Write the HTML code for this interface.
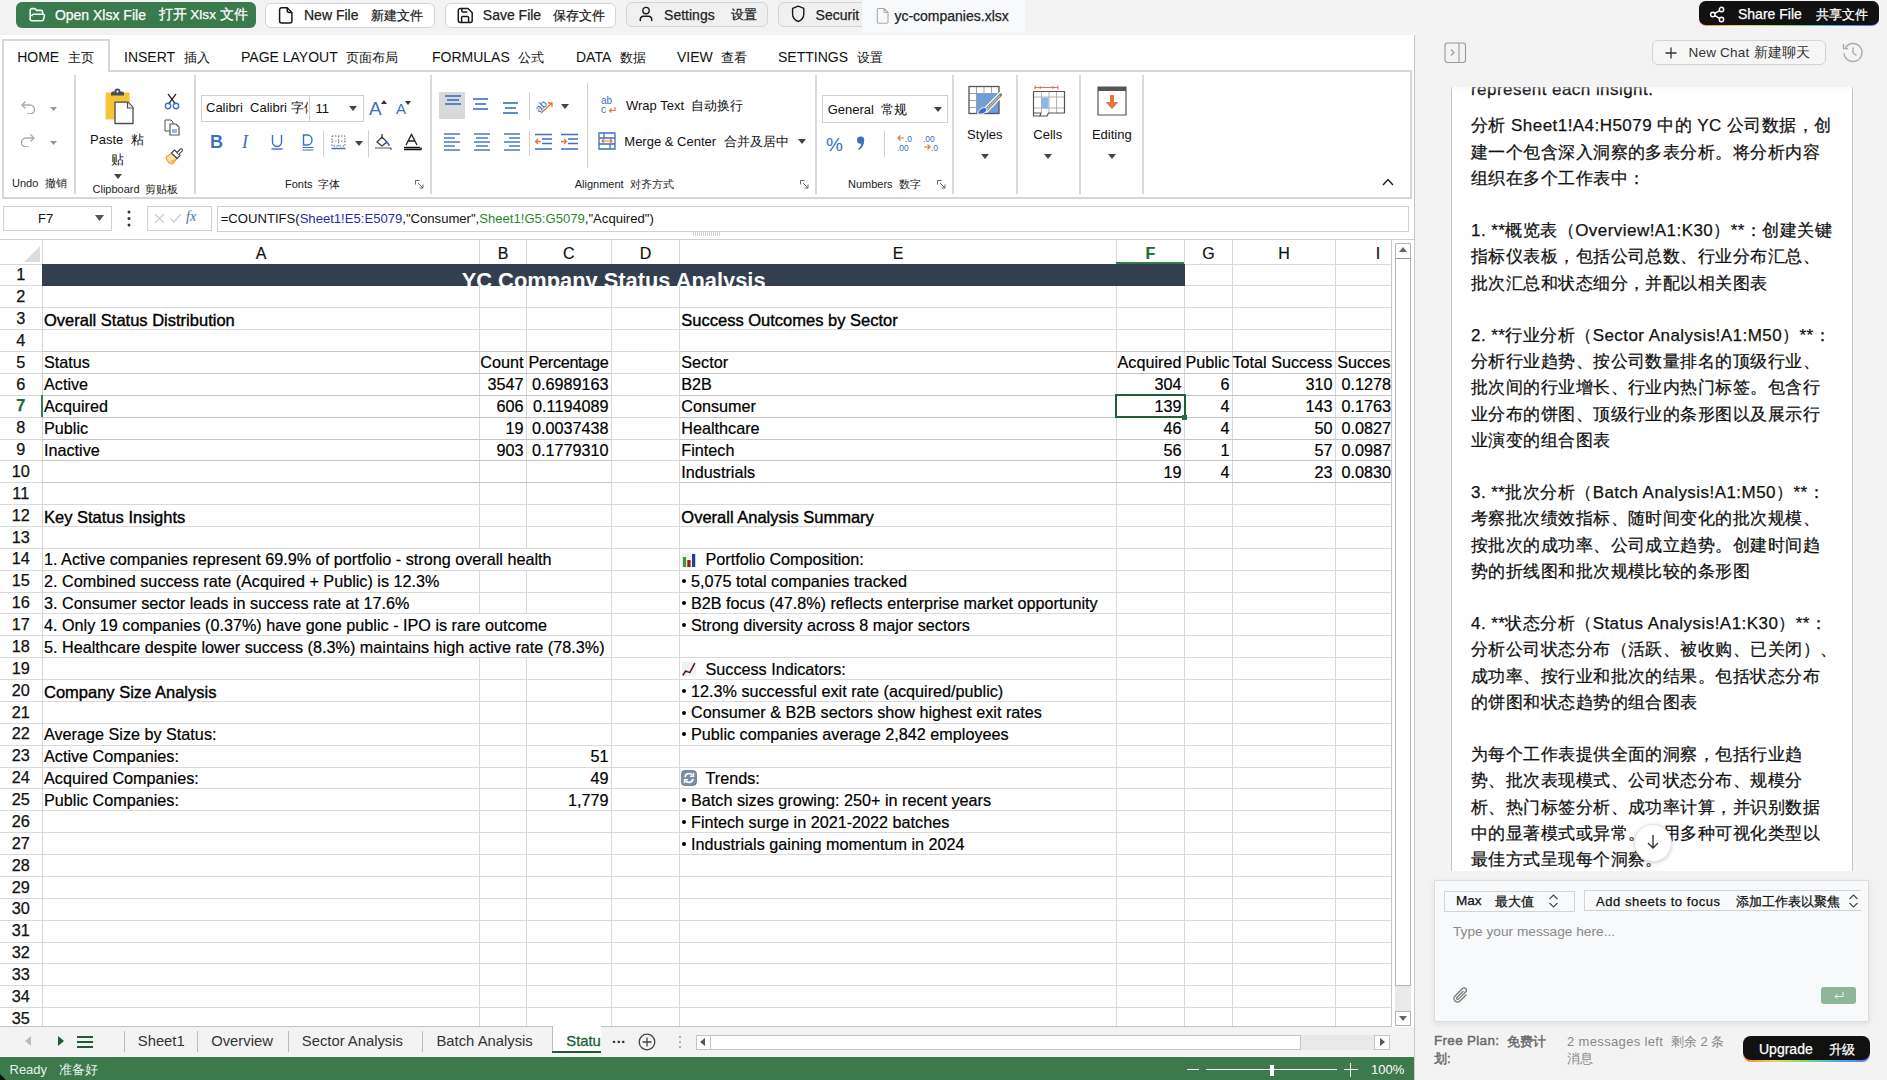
<!DOCTYPE html><html><head><meta charset="utf-8"><style>
*{margin:0;padding:0;box-sizing:border-box}
html,body{width:1887px;height:1080px;overflow:hidden;background:#f3f3f3;font-family:"Liberation Sans", sans-serif}
.t{position:absolute;white-space:pre}
.r{position:absolute}
</style></head><body>
<div class="r" style="left:0.0px;top:0.0px;width:1887.0px;height:35.0px;background:#f3f3f3"></div>
<div class="r" style="left:16.3px;top:2.2px;width:240.1px;height:26.0px;background:#3b7a4c;border-radius:6px"></div>
<svg class="r" style="left:28px;top:7px;" width="18" height="16" viewBox="0 0 18 16"><path d="M2.2 13V3.2a1.6 1.6 0 0 1 1.6-1.6h3.1l1.8 1.8h4.3a1.6 1.6 0 0 1 1.6 1.6v2.2" fill="none" stroke="#f2fbf4" stroke-width="1.6" stroke-linejoin="round"/><path d="M3.6 9.2c0.4-1.3 1-1.9 2.1-1.9h9.6a1.1 1.1 0 0 1 1.1 1.3l-0.8 3.8a1.6 1.6 0 0 1-1.6 1.3H3.8a1.6 1.6 0 0 1-1.6-1.6" fill="none" stroke="#f2fbf4" stroke-width="1.6" stroke-linejoin="round"/></svg>
<div class="t" style="left:54.9px;top:6.2px;font-size:14px;line-height:18px;color:#fff;font-weight:normal;-webkit-text-stroke:0.25px currentColor">Open Xlsx File</div>
<div class="t" style="left:158.5px;top:6.2px;font-size:13.6px;line-height:18px;color:#fff;font-weight:normal;-webkit-text-stroke:0.25px currentColor">打开 Xlsx 文件</div>
<div class="r" style="left:265.3px;top:2.5px;width:170.2px;height:25.5px;background:#fff;border:1px solid #d5d5d5;border-radius:6px"></div>
<svg class="r" style="left:278px;top:6px;" width="16" height="18" viewBox="0 0 16 18"><path d="M3.6 1.8h5.6l4.7 4.7v8.5a2 2 0 0 1-2 2H3.6a2 2 0 0 1-2-2V3.8a2 2 0 0 1 2-2z" fill="none" stroke="#1a1a1a" stroke-width="1.5" stroke-linejoin="round"/><path d="M9.2 1.8v2.7a2 2 0 0 0 2 2h2.7" fill="none" stroke="#1a1a1a" stroke-width="1.5"/></svg>
<div class="t" style="left:304.0px;top:6.2px;font-size:14px;line-height:18px;color:#222;font-weight:normal;-webkit-text-stroke:0.25px currentColor">New File</div>
<div class="t" style="left:370.8px;top:6.7px;font-size:13px;line-height:17px;color:#222;font-weight:normal;-webkit-text-stroke:0.25px currentColor">新建文件</div>
<div class="r" style="left:445.0px;top:2.5px;width:171.0px;height:25.5px;background:#fff;border:1px solid #d5d5d5;border-radius:6px"></div>
<svg class="r" style="left:457px;top:7px;" width="17" height="17" viewBox="0 0 17 17"><path d="M3.3 1.5h7.7l4.2 4.2v7.8a2 2 0 0 1-2 2H3.3a2 2 0 0 1-2-2V3.5a2 2 0 0 1 2-2z" fill="none" stroke="#1a1a1a" stroke-width="1.5" stroke-linejoin="round"/><path d="M4.8 1.5v2.5a1 1 0 0 0 1 1h4.5" fill="none" stroke="#1a1a1a" stroke-width="1.5"/><path d="M4.6 15.5v-5a1 1 0 0 1 1-1h5a1 1 0 0 1 1 1v5" fill="none" stroke="#1a1a1a" stroke-width="1.5"/></svg>
<div class="t" style="left:482.8px;top:6.2px;font-size:14px;line-height:18px;color:#222;font-weight:normal;-webkit-text-stroke:0.25px currentColor">Save File</div>
<div class="t" style="left:552.7px;top:6.7px;font-size:13px;line-height:17px;color:#222;font-weight:normal;-webkit-text-stroke:0.25px currentColor">保存文件</div>
<div class="r" style="left:626.0px;top:2.0px;width:142.0px;height:25.0px;background:#f0f0f0;border:1px solid #d5d5d5;border-radius:6px"></div>
<svg class="r" style="left:639px;top:6px;" width="14" height="16" viewBox="0 0 14 16"><circle cx="7" cy="4.6" r="3.2" fill="none" stroke="#1a1a1a" stroke-width="1.4"/><path d="M1.3 14.6v-1.2a3.2 3.2 0 0 1 3.2-3.2h5a3.2 3.2 0 0 1 3.2 3.2v1.2" fill="none" stroke="#1a1a1a" stroke-width="1.5" stroke-linecap="round"/></svg>
<div class="t" style="left:664.1px;top:5.7px;font-size:14px;line-height:18px;color:#222;font-weight:normal;-webkit-text-stroke:0.25px currentColor">Settings</div>
<div class="t" style="left:730.8px;top:6.2px;font-size:13px;line-height:17px;color:#222;font-weight:normal;-webkit-text-stroke:0.25px currentColor">设置</div>
<div class="r" style="left:778.0px;top:2.0px;width:102.0px;height:25.0px;background:#f0f0f0;border:1px solid #d5d5d5;border-radius:6px"></div>
<svg class="r" style="left:791px;top:5px;" width="15" height="18" viewBox="0 0 15 18"><path d="M7.2 1.2l5.6 2.2v5.5c0 3.6-2.4 6.2-5.6 7.6-3.2-1.4-5.6-4-5.6-7.6V3.4z" fill="none" stroke="#1a1a1a" stroke-width="1.4" stroke-linejoin="round"/></svg>
<div class="t" style="left:815.6px;top:5.7px;font-size:14px;line-height:18px;color:#222;font-weight:normal;-webkit-text-stroke:0.25px currentColor">Securit</div>
<div class="r" style="left:862.0px;top:0.0px;width:163.0px;height:33.0px;background:#f8f9fa"></div>
<svg class="r" style="left:876px;top:7px;" width="14" height="17" viewBox="0 0 14 17"><path d="M2.5 1.5h5.5l4 4v9.5a1.2 1.2 0 0 1-1.2 1.2H2.5a1.2 1.2 0 0 1-1.2-1.2V2.7a1.2 1.2 0 0 1 1.2-1.2z M8 1.5v3a1 1 0 0 0 1 1h3" fill="none" stroke="#aaa" stroke-width="1.1" stroke-linejoin="round"/></svg>
<div class="t" style="left:894.4px;top:7.0px;font-size:14px;line-height:18px;color:#222;font-weight:normal;-webkit-text-stroke:0.25px currentColor">yc-companies.xlsx</div>
<div class="r" style="left:1699.0px;top:1.3px;width:180.0px;height:25.2px;background:linear-gradient(90deg,#f08a3c,#e7d84a,#7bd67a,#4aa8e8,#6a6ef0);border-radius:7px"></div>
<div class="r" style="left:1699.0px;top:1.3px;width:180.0px;height:23.5px;background:#111;border-radius:7px"></div>
<svg class="r" style="left:1709px;top:6px;" width="17" height="17" viewBox="0 0 17 17"><circle cx="12.5" cy="3.5" r="2.2" fill="none" stroke="#fff" stroke-width="1.4"/><circle cx="3.8" cy="8.5" r="2.2" fill="none" stroke="#fff" stroke-width="1.4"/><circle cx="12.5" cy="13.5" r="2.2" fill="none" stroke="#fff" stroke-width="1.4"/><path d="M5.8 7.4l4.8-2.8M5.8 9.6l4.8 2.8" stroke="#fff" stroke-width="1.4"/></svg>
<div class="t" style="left:1738.0px;top:5.0px;font-size:14px;line-height:18px;color:#fff;font-weight:normal;-webkit-text-stroke:0.25px currentColor">Share File</div>
<div class="t" style="left:1816.0px;top:5.5px;font-size:13px;line-height:17px;color:#fff;font-weight:normal;-webkit-text-stroke:0.25px currentColor">共享文件</div>
<div class="r" style="left:0.0px;top:34.5px;width:1414.5px;height:1045.5px;background:#fff;border-right:1px solid #c8c8c8"></div>
<div class="r" style="left:2.0px;top:70.0px;width:1409.5px;height:129.0px;border:2px solid #d6d6d6;border-top:none;background:#fff"></div>
<div class="r" style="left:109.0px;top:69.5px;width:1302.5px;height:2.0px;background:#d6d6d6"></div>
<div class="r" style="left:2.0px;top:39.0px;width:108.0px;height:33.0px;background:#fff;border:2px solid #d6d6d6;border-bottom:none"></div>
<div class="t" style="left:17.2px;top:48.0px;font-size:14px;line-height:18px;color:#111;font-weight:normal;">HOME</div>
<div class="t" style="left:67.7px;top:48.5px;font-size:13px;line-height:17px;color:#111;font-weight:normal;">主页</div>
<div class="t" style="left:124.0px;top:48.0px;font-size:14px;line-height:18px;color:#111;font-weight:normal;">INSERT</div>
<div class="t" style="left:183.6px;top:48.5px;font-size:13px;line-height:17px;color:#111;font-weight:normal;">插入</div>
<div class="t" style="left:241.0px;top:48.0px;font-size:14px;line-height:18px;color:#111;font-weight:normal;">PAGE LAYOUT</div>
<div class="t" style="left:346.3px;top:48.5px;font-size:13px;line-height:17px;color:#111;font-weight:normal;">页面布局</div>
<div class="t" style="left:432.0px;top:48.0px;font-size:14px;line-height:18px;color:#111;font-weight:normal;">FORMULAS</div>
<div class="t" style="left:518.3px;top:48.5px;font-size:13px;line-height:17px;color:#111;font-weight:normal;">公式</div>
<div class="t" style="left:576.0px;top:48.0px;font-size:14px;line-height:18px;color:#111;font-weight:normal;">DATA</div>
<div class="t" style="left:619.8px;top:48.5px;font-size:13px;line-height:17px;color:#111;font-weight:normal;">数据</div>
<div class="t" style="left:677.0px;top:48.0px;font-size:14px;line-height:18px;color:#111;font-weight:normal;">VIEW</div>
<div class="t" style="left:721.3px;top:48.5px;font-size:13px;line-height:17px;color:#111;font-weight:normal;">查看</div>
<div class="t" style="left:778.0px;top:48.0px;font-size:14px;line-height:18px;color:#111;font-weight:normal;">SETTINGS</div>
<div class="t" style="left:856.5px;top:48.5px;font-size:13px;line-height:17px;color:#111;font-weight:normal;">设置</div>
<div class="r" style="left:73.6px;top:74.6px;width:2.0px;height:119.9px;background:#dadada"></div>
<div class="r" style="left:193.6px;top:74.6px;width:2.0px;height:119.9px;background:#dadada"></div>
<div class="r" style="left:429.9px;top:74.6px;width:2.0px;height:119.9px;background:#dadada"></div>
<div class="r" style="left:815.3px;top:74.6px;width:2.0px;height:119.9px;background:#dadada"></div>
<div class="r" style="left:951.7px;top:74.6px;width:2.0px;height:119.9px;background:#dadada"></div>
<div class="r" style="left:1015.7px;top:74.6px;width:2.0px;height:119.9px;background:#dadada"></div>
<div class="r" style="left:1078.7px;top:74.6px;width:2.0px;height:119.9px;background:#dadada"></div>
<div class="r" style="left:1142.0px;top:74.6px;width:2.0px;height:119.9px;background:#dadada"></div>
<div class="t" style="left:12.0px;top:176.4px;font-size:11px;line-height:14px;color:#222;font-weight:normal;">Undo</div>
<div class="t" style="left:45.0px;top:176.4px;font-size:11px;line-height:14px;color:#222;font-weight:normal;">撤销</div>
<div class="t" style="left:92.5px;top:182.0px;font-size:11px;line-height:14px;color:#222;font-weight:normal;">Clipboard</div>
<div class="t" style="left:145.0px;top:182.0px;font-size:11px;line-height:14px;color:#222;font-weight:normal;">剪贴板</div>
<div class="t" style="left:285.0px;top:177.0px;font-size:11px;line-height:14px;color:#222;font-weight:normal;">Fonts</div>
<div class="t" style="left:318.0px;top:177.0px;font-size:11px;line-height:14px;color:#222;font-weight:normal;">字体</div>
<div class="t" style="left:574.7px;top:176.7px;font-size:11px;line-height:14px;color:#222;font-weight:normal;">Alignment</div>
<div class="t" style="left:630.0px;top:176.7px;font-size:11px;line-height:14px;color:#222;font-weight:normal;">对齐方式</div>
<div class="t" style="left:848.0px;top:176.9px;font-size:11px;line-height:14px;color:#222;font-weight:normal;">Numbers</div>
<div class="t" style="left:899.0px;top:176.9px;font-size:11px;line-height:14px;color:#222;font-weight:normal;">数字</div>
<svg class="r" style="left:415px;top:180px;" width="9" height="9" viewBox="0 0 9 9"><path d="M0.5 0.5h4M0.5 0.5v4" stroke="#666" stroke-width="1" fill="none"/><path d="M3 3l5 5M8 4.5v3.5h-3.5" stroke="#666" stroke-width="1" fill="none"/></svg>
<svg class="r" style="left:800px;top:179.5px;" width="9" height="9" viewBox="0 0 9 9"><path d="M0.5 0.5h4M0.5 0.5v4" stroke="#666" stroke-width="1" fill="none"/><path d="M3 3l5 5M8 4.5v3.5h-3.5" stroke="#666" stroke-width="1" fill="none"/></svg>
<svg class="r" style="left:937px;top:179.5px;" width="9" height="9" viewBox="0 0 9 9"><path d="M0.5 0.5h4M0.5 0.5v4" stroke="#666" stroke-width="1" fill="none"/><path d="M3 3l5 5M8 4.5v3.5h-3.5" stroke="#666" stroke-width="1" fill="none"/></svg>
<svg class="r" style="left:1382px;top:178px;" width="12" height="8" viewBox="0 0 12 8"><path d="M1 7l5-5.5 5 5.5" fill="none" stroke="#222" stroke-width="1.4"/></svg>
<svg class="r" style="left:19px;top:100px;" width="18" height="14" viewBox="0 0 18 14"><path d="M3 5h8a4.5 4.5 0 0 1 0 9h-3" fill="none" stroke="#aaa" stroke-width="1.4"/><path d="M6.5 1.5L3 5l3.5 3.5" fill="none" stroke="#aaa" stroke-width="1.4"/></svg>
<svg class="r" style="left:50px;top:107px;" width="7" height="4" viewBox="0 0 7 4"><path d="M0 0h7L3.5 4z" fill="#999"/></svg>
<svg class="r" style="left:19px;top:133px;" width="18" height="14" viewBox="0 0 18 14"><path d="M15 5H7a4.5 4.5 0 0 0 0 9h3" fill="none" stroke="#aaa" stroke-width="1.4"/><path d="M11.5 1.5L15 5l-3.5 3.5" fill="none" stroke="#aaa" stroke-width="1.4"/></svg>
<svg class="r" style="left:50px;top:141px;" width="7" height="4" viewBox="0 0 7 4"><path d="M0 0h7L3.5 4z" fill="#999"/></svg>
<svg class="r" style="left:104px;top:88px;" width="31" height="37" viewBox="0 0 31 37"><rect x="1.6" y="4.5" width="24" height="27" rx="1" fill="#f4c537"/><path d="M7 7.5v-2a2 2 0 0 1 2-2h1.5a3 3 0 0 1 6 0H18a2 2 0 0 1 2 2v2z" fill="#4a4f55"/><circle cx="13.5" cy="3.6" r="1.1" fill="#fff"/><path d="M11 14.2h13l5 5.3v16H11z" fill="#fff" stroke="#4a4a4a" stroke-width="1.3" stroke-linejoin="round"/><path d="M23.5 14.2v5.8H29" fill="#f2f2f2" stroke="#4a4a4a" stroke-width="1.2"/></svg>
<div class="t" style="left:90.0px;top:130.9px;font-size:13px;line-height:17px;color:#111;font-weight:normal;">Paste</div>
<div class="t" style="left:131.0px;top:130.9px;font-size:13px;line-height:17px;color:#111;font-weight:normal;">粘</div>
<div class="t" style="left:111.0px;top:150.5px;font-size:13px;line-height:17px;color:#111;font-weight:normal;">贴</div>
<svg class="r" style="left:114px;top:174px;" width="8" height="5" viewBox="0 0 8 5"><path d="M0 0h8L4 5z" fill="#444"/></svg>
<svg class="r" style="left:164px;top:93px;" width="16" height="17" viewBox="0 0 16 17"><path d="M4 1l7.5 10M12 1L4.5 11" stroke="#333" stroke-width="1.3"/><circle cx="4" cy="13" r="2.7" fill="none" stroke="#3b6fc0" stroke-width="1.4"/><circle cx="12" cy="13" r="2.7" fill="none" stroke="#3b6fc0" stroke-width="1.4"/></svg>
<svg class="r" style="left:164px;top:119px;" width="17" height="17" viewBox="0 0 17 17"><path d="M1 1h6l2 2v9H1z" fill="#fff" stroke="#555" stroke-width="1"/><path d="M6 5h6l3 3v8H6z" fill="#fff" stroke="#555" stroke-width="1.2"/><path d="M8 11h5M8 13h5" stroke="#3b6fc0" stroke-width="1.1"/></svg>
<svg class="r" style="left:165px;top:147px;" width="19" height="18" viewBox="0 0 19 18"><path d="M1 10.5L6.5 6l5.5 5.5-4.5 5.5c-3-0.5-5.5-3-6.5-6.5z" fill="#fbe3b5" stroke="#eda23a" stroke-width="1.2" stroke-linejoin="round"/><path d="M5 14l3.5 3 3.5-5.5z" fill="#f2b54a"/><path d="M6.5 6l3-3 5.5 5.5-3 3z" fill="#fff" stroke="#444" stroke-width="1.1" stroke-linejoin="round"/><path d="M12 5.5l3.5-3.5a1.3 1.3 0 0 1 1.8 1.8L13.8 7.3" fill="#fff" stroke="#444" stroke-width="1.1"/></svg>
<div class="r" style="left:201.3px;top:94.9px;width:108.7px;height:27.4px;border:1px solid #d0d0d0;background:#fff"></div>
<div class="r" style="left:309.0px;top:94.9px;width:55.2px;height:27.4px;border:1px solid #d0d0d0;background:#fff"></div>
<div class="t" style="left:206px;top:99px;width:102px;overflow:hidden;font-size:13px;line-height:18px;color:#111">Calibri  Calibri 字体</div>
<div class="t" style="left:315.5px;top:100.1px;font-size:13px;line-height:17px;color:#111;font-weight:normal;">11</div>
<svg class="r" style="left:349px;top:106px;" width="8" height="5" viewBox="0 0 8 5"><path d="M0 0h8L4 5z" fill="#444"/></svg>
<div class="t" style="left:369.0px;top:96.0px;font-size:19px;line-height:25px;color:#3b6fc0;font-weight:normal;">A</div>
<svg class="r" style="left:381px;top:100px;" width="6" height="4" viewBox="0 0 6 4"><path d="M0 4L3 0l3 4z" fill="#333"/></svg>
<div class="t" style="left:396.0px;top:99.0px;font-size:15px;line-height:20px;color:#3b6fc0;font-weight:normal;">A</div>
<svg class="r" style="left:405px;top:101px;" width="6" height="4" viewBox="0 0 6 4"><path d="M0 0h6L3 4z" fill="#333"/></svg>
<div class="t" style="left:210.0px;top:130.5px;font-size:18px;line-height:23px;color:#3b6fc0;font-weight:bold;">B</div>
<div class="t" style="left:242px;top:130px;font-size:18px;line-height:24px;color:#3b6fc0;font-family:'Liberation Serif',serif;font-style:italic">I</div>
<svg class="r" style="left:271px;top:134px;" width="12" height="16" viewBox="0 0 12 16"><path d="M1.5 1v7a4.5 4.5 0 0 0 9 0V1" fill="none" stroke="#3b6fc0" stroke-width="1.4"/><path d="M0.5 15h11" stroke="#3b6fc0" stroke-width="1.4"/></svg>
<svg class="r" style="left:302px;top:134px;" width="12" height="17" viewBox="0 0 12 17"><path d="M1.5 1h4a4.5 5 0 0 1 0 10h-4z" fill="none" stroke="#3b6fc0" stroke-width="1.4"/><path d="M0.5 13.5h11M0.5 16h11" stroke="#3b6fc0" stroke-width="1.2"/></svg>
<div class="r" style="left:323.0px;top:129.6px;width:1.0px;height:27.8px;background:#d0d0d0"></div>
<svg class="r" style="left:331px;top:135px;" width="16" height="15" viewBox="0 0 16 15"><path d="M1 1h13v10H1z" fill="none" stroke="#666" stroke-width="1" stroke-dasharray="1.5 1.5"/><path d="M7.5 1v10M1 6h13" stroke="#888" stroke-width="1" stroke-dasharray="1.5 1.5"/><path d="M0.5 13.5h14" stroke="#3b6fc0" stroke-width="1.5"/></svg>
<svg class="r" style="left:355px;top:141px;" width="8" height="5" viewBox="0 0 8 5"><path d="M0 0h8L4 5z" fill="#444"/></svg>
<div class="r" style="left:368.0px;top:129.6px;width:1.0px;height:27.8px;background:#d0d0d0"></div>
<svg class="r" style="left:374px;top:133px;" width="19" height="18" viewBox="0 0 19 18"><path d="M3 9l5-5 5 5-5 4z" fill="none" stroke="#333" stroke-width="1.2"/><path d="M8 1v5" stroke="#333" stroke-width="1.2"/><path d="M12 9c2 1 3 3 3 4" stroke="#3b6fc0" stroke-width="1.6" fill="none"/><path d="M1 15h16v2" fill="none" stroke="#555" stroke-width="1.2"/></svg>
<svg class="r" style="left:403px;top:133px;" width="19" height="18" viewBox="0 0 19 18"><path d="M3 12L8.5 1.5 14 12M5 8h7" fill="none" stroke="#222" stroke-width="1.4"/><path d="M1 14.5h16M1 16.5h17v-2" fill="none" stroke="#111" stroke-width="1.4"/></svg>
<div class="r" style="left:438.9px;top:92.3px;width:26.2px;height:26.3px;background:#d9d9d9"></div>
<svg class="r" style="left:440px;top:93px;" width="24" height="24" viewBox="0 0 24 24"><path d="M5 3H21" stroke="#3b6fc0" stroke-width="1.6"/><path d="M7 7H19" stroke="#3b6fc0" stroke-width="1.6"/><path d="M5 11H21" stroke="#3b6fc0" stroke-width="1.6"/></svg>
<svg class="r" style="left:471px;top:96px;" width="24" height="24" viewBox="0 0 24 24"><path d="M2 3H17" stroke="#3b6fc0" stroke-width="1.6"/><path d="M4 8H15" stroke="#3b6fc0" stroke-width="1.6"/><path d="M2 13H17" stroke="#3b6fc0" stroke-width="1.6"/></svg>
<svg class="r" style="left:501px;top:100px;" width="24" height="24" viewBox="0 0 24 24"><path d="M2 3H17" stroke="#3b6fc0" stroke-width="1.6"/><path d="M4 8H15" stroke="#3b6fc0" stroke-width="1.6"/><path d="M2 13H17" stroke="#3b6fc0" stroke-width="1.6"/></svg>
<div class="r" style="left:529.0px;top:92.0px;width:1.0px;height:28.0px;background:#d0d0d0"></div>
<svg class="r" style="left:534px;top:96px;" width="22" height="20" viewBox="0 0 22 20"><text x="1" y="13" font-size="11" fill="#3b6fc0" transform="rotate(-45 8 10)" font-family="Liberation Sans">ab</text><path d="M7 17l11-10M14 7h4v4" fill="none" stroke="#e8743b" stroke-width="1.3"/></svg>
<svg class="r" style="left:561px;top:104px;" width="8" height="5" viewBox="0 0 8 5"><path d="M0 0h8L4 5z" fill="#444"/></svg>
<svg class="r" style="left:443px;top:133px;" width="24" height="24" viewBox="0 0 24 24"><path d="M1 1H17" stroke="#3b6fc0" stroke-width="1.4"/><path d="M1 5H12" stroke="#3b6fc0" stroke-width="1.4"/><path d="M1 9H17" stroke="#3b6fc0" stroke-width="1.4"/><path d="M1 13H12" stroke="#3b6fc0" stroke-width="1.4"/><path d="M1 17H17" stroke="#3b6fc0" stroke-width="1.4"/></svg>
<svg class="r" style="left:473px;top:133px;" width="24" height="24" viewBox="0 0 24 24"><path d="M1 1H17" stroke="#3b6fc0" stroke-width="1.4"/><path d="M3 5H15" stroke="#3b6fc0" stroke-width="1.4"/><path d="M1 9H17" stroke="#3b6fc0" stroke-width="1.4"/><path d="M3 13H15" stroke="#3b6fc0" stroke-width="1.4"/><path d="M1 17H17" stroke="#3b6fc0" stroke-width="1.4"/></svg>
<svg class="r" style="left:503px;top:133px;" width="24" height="24" viewBox="0 0 24 24"><path d="M1 1H17" stroke="#3b6fc0" stroke-width="1.4"/><path d="M6 5H17" stroke="#3b6fc0" stroke-width="1.4"/><path d="M1 9H17" stroke="#3b6fc0" stroke-width="1.4"/><path d="M6 13H17" stroke="#3b6fc0" stroke-width="1.4"/><path d="M1 17H17" stroke="#3b6fc0" stroke-width="1.4"/></svg>
<div class="r" style="left:529.0px;top:131.0px;width:1.0px;height:25.0px;background:#d0d0d0"></div>
<svg class="r" style="left:534px;top:133px;" width="20" height="20" viewBox="0 0 20 20"><path d="M1 1.5h17M8 6h10M8 10.5h10M1 16h17" stroke="#3b6fc0" stroke-width="1.4"/><path d="M7 8.5H1.5M4 6l-2.5 2.5L4 11" fill="none" stroke="#e8743b" stroke-width="1.3"/></svg>
<svg class="r" style="left:560px;top:133px;" width="20" height="20" viewBox="0 0 20 20"><path d="M1 1.5h17M8 6h10M8 10.5h10M1 16h17" stroke="#3b6fc0" stroke-width="1.4"/><path d="M1 8.5h5.5M4 6l2.5 2.5L4 11" fill="none" stroke="#e8743b" stroke-width="1.3"/></svg>
<div class="r" style="left:587.0px;top:83.4px;width:1.0px;height:84.8px;background:#d0d0d0"></div>
<svg class="r" style="left:600px;top:96px;" width="18" height="19" viewBox="0 0 18 19"><text x="1" y="8" font-size="10" fill="#3b6fc0" font-family="Liberation Sans">ab</text><text x="1" y="17" font-size="10" fill="#3b6fc0" font-family="Liberation Sans">c</text><path d="M15 11v3.5H9.5M11.5 12.5l-2 2 2 2" fill="none" stroke="#e8743b" stroke-width="1.2"/></svg>
<div class="t" style="left:626.0px;top:97.0px;font-size:13px;line-height:17px;color:#111;font-weight:normal;">Wrap Text</div>
<div class="t" style="left:691.0px;top:97.0px;font-size:13px;line-height:17px;color:#111;font-weight:normal;">自动换行</div>
<svg class="r" style="left:598px;top:132px;" width="18" height="18" viewBox="0 0 18 18"><path d="M1 1h16v16H1z M1 6h16M1 12h16M6 1v5M12 12v5" fill="none" stroke="#3b6fc0" stroke-width="1.3"/><path d="M4 9h10M6 7l-2 2 2 2M12 7l2 2-2 2" fill="none" stroke="#e8743b" stroke-width="1.2"/></svg>
<div class="t" style="left:624.3px;top:132.8px;font-size:13px;line-height:17px;color:#111;font-weight:normal;">Merge & Center</div>
<div class="t" style="left:724.0px;top:132.8px;font-size:13px;line-height:17px;color:#111;font-weight:normal;">合并及居中</div>
<svg class="r" style="left:798px;top:139px;" width="8" height="5" viewBox="0 0 8 5"><path d="M0 0h8L4 5z" fill="#444"/></svg>
<div class="r" style="left:822.3px;top:95.2px;width:125.5px;height:28.0px;border:1px solid #d0d0d0;background:#fff"></div>
<div class="t" style="left:827.7px;top:100.7px;font-size:13px;line-height:17px;color:#111;font-weight:normal;">General</div>
<div class="t" style="left:881.0px;top:100.7px;font-size:13px;line-height:17px;color:#111;font-weight:normal;">常规</div>
<svg class="r" style="left:934px;top:107px;" width="8" height="5" viewBox="0 0 8 5"><path d="M0 0h8L4 5z" fill="#444"/></svg>
<div class="t" style="left:826.0px;top:131.5px;font-size:19px;line-height:25px;color:#3b6fc0;font-weight:normal;">%</div>
<svg class="r" style="left:856px;top:136px;" width="9" height="15" viewBox="0 0 9 15"><circle cx="4.6" cy="4.2" r="3.6" fill="#3b6fc0"/><path d="M7.8 4.5c0.5 4-1.5 7.5-5 9.5l-0.8-1c2.5-2 3.5-4 3.2-6.5z" fill="#3b6fc0"/></svg>
<div class="r" style="left:883.5px;top:131.0px;width:1.0px;height:26.0px;background:#d0d0d0"></div>
<svg class="r" style="left:897px;top:134px;" width="18" height="19" viewBox="0 0 18 19"><path d="M1 4h6M3.5 1.5L1 4l2.5 2.5" fill="none" stroke="#e8743b" stroke-width="1.2"/><text x="8" y="8" font-size="8.5" fill="#3b6fc0" font-family="Liberation Sans">.0</text><text x="0" y="17" font-size="8.5" fill="#3b6fc0" font-family="Liberation Sans">.00</text></svg>
<svg class="r" style="left:923px;top:134px;" width="18" height="19" viewBox="0 0 18 19"><text x="0" y="8" font-size="8.5" fill="#3b6fc0" font-family="Liberation Sans">.00</text><path d="M1 13h6M4.5 10.5L7 13l-2.5 2.5" fill="none" stroke="#e8743b" stroke-width="1.2"/><text x="8" y="17" font-size="8.5" fill="#3b6fc0" font-family="Liberation Sans">.0</text></svg>
<svg class="r" style="left:968px;top:85px;" width="35" height="32" viewBox="0 0 35 32"><rect x="1" y="1.5" width="30" height="27" fill="#fff"/><rect x="8.5" y="8.5" width="22.5" height="20" fill="#6a9ee6"/><path d="M1 8.5h30M1 15.5h30M1 22.5h30M8.5 1.5v27M16 1.5v27M23.5 1.5v27" stroke="#999" stroke-width="0.9"/><rect x="1" y="1.5" width="30" height="27" fill="none" stroke="#555" stroke-width="1.3"/><path d="M32.5 10L18 25" stroke="#fff" stroke-width="5.5" stroke-linecap="round"/><path d="M32.5 10L18 25" stroke="#777" stroke-width="3.2" stroke-linecap="round"/><path d="M32 10.5L19 24" stroke="#bbb" stroke-width="1.4"/><path d="M9.5 29c1-4 4-6.5 7-6.5 2 0 3 2 2 3.5-2 3-5.5 3.5-9 3z" fill="#3a70c8" stroke="#fff" stroke-width="1"/></svg>
<div class="t" style="left:584.8px;width:800px;text-align:center;top:126.0px;font-size:13px;line-height:17px;color:#111;font-weight:normal;">Styles</div>
<svg class="r" style="left:981px;top:154px;" width="8" height="5" viewBox="0 0 8 5"><path d="M0 0h8L4 5z" fill="#444"/></svg>
<svg class="r" style="left:1032px;top:85px;" width="34" height="32" viewBox="0 0 34 32"><path d="M3 2.5h23M3 0.5v4M26 0.5v4" stroke="#e0705a" stroke-width="1.1"/><path d="M6 2.5l3-1.5v3zM23 2.5l-3-1.5v3z" fill="#e0705a"/><rect x="1.5" y="6.5" width="31" height="21.5" fill="#fff"/><path d="M1.5 12h31M1.5 23h31M9.5 6.5v21.5M17 6.5v21.5M24.5 6.5v21.5" stroke="#aaa" stroke-width="0.9"/><rect x="10" y="12.5" width="6.5" height="11" fill="#8ab6ee"/><path d="M1.5 6.5h31v21.5H16.5l-1.5 3h-7l1-3H1.5z" fill="none" stroke="#555" stroke-width="1.2" stroke-linejoin="round"/><path d="M1.5 28v3h6.5" fill="none" stroke="#555" stroke-width="1.2"/></svg>
<div class="t" style="left:647.8px;width:800px;text-align:center;top:126.0px;font-size:13px;line-height:17px;color:#111;font-weight:normal;">Cells</div>
<svg class="r" style="left:1044px;top:154px;" width="8" height="5" viewBox="0 0 8 5"><path d="M0 0h8L4 5z" fill="#444"/></svg>
<svg class="r" style="left:1097px;top:86px;" width="30" height="30" viewBox="0 0 30 30"><path d="M1 1h28v28H1z" fill="#fff" stroke="#555" stroke-width="1.2"/><path d="M1 1h28v4H1z" fill="#555"/><path d="M13 9h4v7h4.5L15 23l-6.5-7H13z" fill="#e8743b"/></svg>
<div class="t" style="left:711.8px;width:800px;text-align:center;top:126.0px;font-size:13px;line-height:17px;color:#111;font-weight:normal;">Editing</div>
<svg class="r" style="left:1108px;top:154px;" width="8" height="5" viewBox="0 0 8 5"><path d="M0 0h8L4 5z" fill="#444"/></svg>
<div class="r" style="left:2.5px;top:205.8px;width:109.0px;height:24.8px;border:1px solid #d0d0d0;background:#fff"></div>
<div class="t" style="left:38.0px;top:210.0px;font-size:13px;line-height:17px;color:#111;font-weight:normal;">F7</div>
<svg class="r" style="left:95px;top:215px;" width="9" height="6" viewBox="0 0 9 6"><path d="M0 0h9L4.5 6z" fill="#555"/></svg>
<svg class="r" style="left:127px;top:210px;" width="4" height="17" viewBox="0 0 4 17"><circle cx="2" cy="2" r="1.5" fill="#333"/><circle cx="2" cy="8.5" r="1.5" fill="#333"/><circle cx="2" cy="15" r="1.5" fill="#333"/></svg>
<div class="r" style="left:147.0px;top:205.8px;width:64.6px;height:25.0px;border:1px solid #d0d0d0;background:#fff"></div>
<svg class="r" style="left:153px;top:212px;" width="14" height="12" viewBox="0 0 14 12"><path d="M2 2l9 9M11 2l-9 9" stroke="#ccc" stroke-width="1.2"/></svg>
<svg class="r" style="left:169px;top:212px;" width="14" height="12" viewBox="0 0 14 12"><path d="M1.5 6.5l3.5 3.5 7-8" fill="none" stroke="#ccc" stroke-width="1.2"/></svg>
<div class="t" style="left:186px;top:209px;font-size:14px;line-height:16px;color:#3b6fc0;font-family:'Liberation Serif',serif;font-style:italic">fx</div>
<div class="r" style="left:217.0px;top:206.0px;width:1191.5px;height:25.6px;border:1px solid #d0d0d0;background:#fff"></div>
<div class="t" style="left:220.7px;top:210.3px;font-size:13.1px;line-height:17px;color:#111;font-weight:normal;">=COUNTIFS(<span style="color:#1f2bb0">Sheet1!E5:E5079</span>,"Consumer",<span style="color:#2a8a2a">Sheet1!G5:G5079</span>,"Acquired")</div>
<svg class="r" style="left:693px;top:232px;" width="27" height="5" viewBox="0 0 27 5"><path d="M0 1h27M0 3h27" stroke="#999" stroke-width="0.8" stroke-dasharray="1 1"/></svg>
<div class="r" style="left:0;top:239px;width:1391.5px;height:788px;overflow:hidden">
<div class="r" style="left:0;top:-239px;width:1887px;height:1080px">
<div class="r" style="left:0.0px;top:239.2px;width:1414.0px;height:1.2px;background:#cfcfcf"></div>
<div class="r" style="left:0.0px;top:263.5px;width:1391.3px;height:1.0px;background:#d9d9d9"></div>
<div class="r" style="left:0.0px;top:285.4px;width:1391.3px;height:1.0px;background:#d9d9d9"></div>
<div class="r" style="left:0.0px;top:307.2px;width:1391.3px;height:1.0px;background:#d9d9d9"></div>
<div class="r" style="left:0.0px;top:329.1px;width:1391.3px;height:1.0px;background:#d9d9d9"></div>
<div class="r" style="left:0.0px;top:351.0px;width:1391.3px;height:1.0px;background:#d9d9d9"></div>
<div class="r" style="left:0.0px;top:372.9px;width:1391.3px;height:1.0px;background:#d9d9d9"></div>
<div class="r" style="left:0.0px;top:394.7px;width:1391.3px;height:1.0px;background:#d9d9d9"></div>
<div class="r" style="left:0.0px;top:416.6px;width:1391.3px;height:1.0px;background:#d9d9d9"></div>
<div class="r" style="left:0.0px;top:438.5px;width:1391.3px;height:1.0px;background:#d9d9d9"></div>
<div class="r" style="left:0.0px;top:460.3px;width:1391.3px;height:1.0px;background:#d9d9d9"></div>
<div class="r" style="left:0.0px;top:482.2px;width:1391.3px;height:1.0px;background:#d9d9d9"></div>
<div class="r" style="left:0.0px;top:504.1px;width:1391.3px;height:1.0px;background:#d9d9d9"></div>
<div class="r" style="left:0.0px;top:525.9px;width:1391.3px;height:1.0px;background:#d9d9d9"></div>
<div class="r" style="left:0.0px;top:547.8px;width:1391.3px;height:1.0px;background:#d9d9d9"></div>
<div class="r" style="left:0.0px;top:569.7px;width:1391.3px;height:1.0px;background:#d9d9d9"></div>
<div class="r" style="left:0.0px;top:591.5px;width:1391.3px;height:1.0px;background:#d9d9d9"></div>
<div class="r" style="left:0.0px;top:613.4px;width:1391.3px;height:1.0px;background:#d9d9d9"></div>
<div class="r" style="left:0.0px;top:635.3px;width:1391.3px;height:1.0px;background:#d9d9d9"></div>
<div class="r" style="left:0.0px;top:657.2px;width:1391.3px;height:1.0px;background:#d9d9d9"></div>
<div class="r" style="left:0.0px;top:679.0px;width:1391.3px;height:1.0px;background:#d9d9d9"></div>
<div class="r" style="left:0.0px;top:700.9px;width:1391.3px;height:1.0px;background:#d9d9d9"></div>
<div class="r" style="left:0.0px;top:722.8px;width:1391.3px;height:1.0px;background:#d9d9d9"></div>
<div class="r" style="left:0.0px;top:744.6px;width:1391.3px;height:1.0px;background:#d9d9d9"></div>
<div class="r" style="left:0.0px;top:766.5px;width:1391.3px;height:1.0px;background:#d9d9d9"></div>
<div class="r" style="left:0.0px;top:788.4px;width:1391.3px;height:1.0px;background:#d9d9d9"></div>
<div class="r" style="left:0.0px;top:810.2px;width:1391.3px;height:1.0px;background:#d9d9d9"></div>
<div class="r" style="left:0.0px;top:832.1px;width:1391.3px;height:1.0px;background:#d9d9d9"></div>
<div class="r" style="left:0.0px;top:854.0px;width:1391.3px;height:1.0px;background:#d9d9d9"></div>
<div class="r" style="left:0.0px;top:875.9px;width:1391.3px;height:1.0px;background:#d9d9d9"></div>
<div class="r" style="left:0.0px;top:897.7px;width:1391.3px;height:1.0px;background:#d9d9d9"></div>
<div class="r" style="left:0.0px;top:919.6px;width:1391.3px;height:1.0px;background:#d9d9d9"></div>
<div class="r" style="left:0.0px;top:941.5px;width:1391.3px;height:1.0px;background:#d9d9d9"></div>
<div class="r" style="left:0.0px;top:963.3px;width:1391.3px;height:1.0px;background:#d9d9d9"></div>
<div class="r" style="left:0.0px;top:985.2px;width:1391.3px;height:1.0px;background:#d9d9d9"></div>
<div class="r" style="left:0.0px;top:1007.1px;width:1391.3px;height:1.0px;background:#d9d9d9"></div>
<div class="r" style="left:0.0px;top:1029.0px;width:1391.3px;height:1.0px;background:#d9d9d9"></div>
<div class="r" style="left:42.0px;top:240.0px;width:1.0px;height:786.5px;background:#d4d4d4"></div>
<div class="r" style="left:479.2px;top:240.0px;width:1.0px;height:786.5px;background:#d9d9d9"></div>
<div class="r" style="left:525.9px;top:240.0px;width:1.0px;height:786.5px;background:#d9d9d9"></div>
<div class="r" style="left:610.9px;top:240.0px;width:1.0px;height:786.5px;background:#d9d9d9"></div>
<div class="r" style="left:679.2px;top:240.0px;width:1.0px;height:786.5px;background:#d9d9d9"></div>
<div class="r" style="left:1115.9px;top:240.0px;width:1.0px;height:786.5px;background:#d9d9d9"></div>
<div class="r" style="left:1183.9px;top:240.0px;width:1.0px;height:786.5px;background:#d9d9d9"></div>
<div class="r" style="left:1232.1px;top:240.0px;width:1.0px;height:786.5px;background:#d9d9d9"></div>
<div class="r" style="left:1334.9px;top:240.0px;width:1.0px;height:786.5px;background:#d9d9d9"></div>
<div class="r" style="left:1390.8px;top:240.0px;width:1.0px;height:786.5px;background:#d9d9d9"></div>
<svg class="r" style="left:23px;top:246px;" width="18" height="16" viewBox="0 0 18 16"><path d="M17 0v16H1z" fill="#dcdcdc"/></svg>
<div class="r" style="left:479.2px;top:548.8px;width:47.8px;height:20.9px;background:#fff"></div>
<div class="r" style="left:479.2px;top:614.4px;width:47.8px;height:20.9px;background:#fff"></div>
<div class="r" style="left:479.2px;top:636.3px;width:47.8px;height:20.9px;background:#fff"></div>
<div class="r" style="left:42.4px;top:264.3px;width:1142.5px;height:21.5px;background:#333f4f;overflow:hidden"></div>
<div class="r" style="left:42.4px;top:264.3px;width:1142.5px;height:21.5px;overflow:hidden"><div class="t" style="left:0;width:1142.5px;text-align:center;top:-0.5px;font-size:21.85px;line-height:34px;color:#fff;font-weight:bold">YC Company Status Analysis</div></div>
<div class="r" style="left:42.4px;top:351.0px;width:569.0px;height:1.0px;background:#c4c4c4"></div>
<div class="r" style="left:679.7px;top:351.0px;width:711.6px;height:1.0px;background:#c4c4c4"></div>
<div class="r" style="left:42.4px;top:372.9px;width:569.0px;height:1.0px;background:#c4c4c4"></div>
<div class="r" style="left:679.7px;top:372.9px;width:711.6px;height:1.0px;background:#c4c4c4"></div>
<div class="r" style="left:42.4px;top:394.7px;width:569.0px;height:1.0px;background:#c4c4c4"></div>
<div class="r" style="left:679.7px;top:394.7px;width:711.6px;height:1.0px;background:#c4c4c4"></div>
<div class="r" style="left:42.4px;top:416.6px;width:569.0px;height:1.0px;background:#c4c4c4"></div>
<div class="r" style="left:679.7px;top:416.6px;width:711.6px;height:1.0px;background:#c4c4c4"></div>
<div class="r" style="left:42.4px;top:438.5px;width:569.0px;height:1.0px;background:#c4c4c4"></div>
<div class="r" style="left:679.7px;top:438.5px;width:711.6px;height:1.0px;background:#c4c4c4"></div>
<div class="r" style="left:42.4px;top:460.3px;width:569.0px;height:1.0px;background:#c4c4c4"></div>
<div class="r" style="left:679.7px;top:460.3px;width:711.6px;height:1.0px;background:#c4c4c4"></div>
<div class="r" style="left:42.4px;top:482.2px;width:569.0px;height:1.0px;background:#c4c4c4"></div>
<div class="r" style="left:679.7px;top:482.2px;width:711.6px;height:1.0px;background:#c4c4c4"></div>
<div class="t" style="left:-138.9px;width:800px;text-align:center;top:242.8px;font-size:16px;line-height:21px;color:#111;font-weight:normal;-webkit-text-stroke:0.2px #111">A</div>
<div class="t" style="left:103.0px;width:800px;text-align:center;top:242.8px;font-size:16px;line-height:21px;color:#111;font-weight:normal;-webkit-text-stroke:0.2px #111">B</div>
<div class="t" style="left:168.9px;width:800px;text-align:center;top:242.8px;font-size:16px;line-height:21px;color:#111;font-weight:normal;-webkit-text-stroke:0.2px #111">C</div>
<div class="t" style="left:245.5px;width:800px;text-align:center;top:242.8px;font-size:16px;line-height:21px;color:#111;font-weight:normal;-webkit-text-stroke:0.2px #111">D</div>
<div class="t" style="left:498.1px;width:800px;text-align:center;top:242.8px;font-size:16px;line-height:21px;color:#111;font-weight:normal;-webkit-text-stroke:0.2px #111">E</div>
<div class="t" style="left:750.4px;width:800px;text-align:center;top:242.8px;font-size:16px;line-height:21px;color:#1f6b35;font-weight:bold;-webkit-text-stroke:0.2px #1f6b35">F</div>
<div class="t" style="left:808.5px;width:800px;text-align:center;top:242.8px;font-size:16px;line-height:21px;color:#111;font-weight:normal;-webkit-text-stroke:0.2px #111">G</div>
<div class="t" style="left:884.0px;width:800px;text-align:center;top:242.8px;font-size:16px;line-height:21px;color:#111;font-weight:normal;-webkit-text-stroke:0.2px #111">H</div>
<div class="t" style="left:978.0px;width:800px;text-align:center;top:242.8px;font-size:16px;line-height:21px;color:#111;font-weight:normal;-webkit-text-stroke:0.2px #111">I</div>
<div class="r" style="left:1116.4px;top:261.8px;width:68.0px;height:2.5px;background:#2e7d46"></div>
<div class="t" style="left:-379.2px;width:800px;text-align:center;top:264.1px;font-size:16.3px;line-height:21px;color:#111;font-weight:normal;-webkit-text-stroke:0.25px #111">1</div>
<div class="t" style="left:-379.2px;width:800px;text-align:center;top:286.0px;font-size:16.3px;line-height:21px;color:#111;font-weight:normal;-webkit-text-stroke:0.25px #111">2</div>
<div class="t" style="left:-379.2px;width:800px;text-align:center;top:307.9px;font-size:16.3px;line-height:21px;color:#111;font-weight:normal;-webkit-text-stroke:0.25px #111">3</div>
<div class="t" style="left:-379.2px;width:800px;text-align:center;top:329.7px;font-size:16.3px;line-height:21px;color:#111;font-weight:normal;-webkit-text-stroke:0.25px #111">4</div>
<div class="t" style="left:-379.2px;width:800px;text-align:center;top:351.6px;font-size:16.3px;line-height:21px;color:#111;font-weight:normal;-webkit-text-stroke:0.25px #111">5</div>
<div class="t" style="left:-379.2px;width:800px;text-align:center;top:373.5px;font-size:16.3px;line-height:21px;color:#111;font-weight:normal;-webkit-text-stroke:0.25px #111">6</div>
<div class="t" style="left:-379.2px;width:800px;text-align:center;top:395.4px;font-size:16.3px;line-height:21px;color:#1f6b35;font-weight:bold;-webkit-text-stroke:0.25px #1f6b35">7</div>
<div class="t" style="left:-379.2px;width:800px;text-align:center;top:417.2px;font-size:16.3px;line-height:21px;color:#111;font-weight:normal;-webkit-text-stroke:0.25px #111">8</div>
<div class="t" style="left:-379.2px;width:800px;text-align:center;top:439.1px;font-size:16.3px;line-height:21px;color:#111;font-weight:normal;-webkit-text-stroke:0.25px #111">9</div>
<div class="t" style="left:-379.2px;width:800px;text-align:center;top:461.0px;font-size:16.3px;line-height:21px;color:#111;font-weight:normal;-webkit-text-stroke:0.25px #111">10</div>
<div class="t" style="left:-379.2px;width:800px;text-align:center;top:482.8px;font-size:16.3px;line-height:21px;color:#111;font-weight:normal;-webkit-text-stroke:0.25px #111">11</div>
<div class="t" style="left:-379.2px;width:800px;text-align:center;top:504.7px;font-size:16.3px;line-height:21px;color:#111;font-weight:normal;-webkit-text-stroke:0.25px #111">12</div>
<div class="t" style="left:-379.2px;width:800px;text-align:center;top:526.6px;font-size:16.3px;line-height:21px;color:#111;font-weight:normal;-webkit-text-stroke:0.25px #111">13</div>
<div class="t" style="left:-379.2px;width:800px;text-align:center;top:548.4px;font-size:16.3px;line-height:21px;color:#111;font-weight:normal;-webkit-text-stroke:0.25px #111">14</div>
<div class="t" style="left:-379.2px;width:800px;text-align:center;top:570.3px;font-size:16.3px;line-height:21px;color:#111;font-weight:normal;-webkit-text-stroke:0.25px #111">15</div>
<div class="t" style="left:-379.2px;width:800px;text-align:center;top:592.2px;font-size:16.3px;line-height:21px;color:#111;font-weight:normal;-webkit-text-stroke:0.25px #111">16</div>
<div class="t" style="left:-379.2px;width:800px;text-align:center;top:614.1px;font-size:16.3px;line-height:21px;color:#111;font-weight:normal;-webkit-text-stroke:0.25px #111">17</div>
<div class="t" style="left:-379.2px;width:800px;text-align:center;top:635.9px;font-size:16.3px;line-height:21px;color:#111;font-weight:normal;-webkit-text-stroke:0.25px #111">18</div>
<div class="t" style="left:-379.2px;width:800px;text-align:center;top:657.8px;font-size:16.3px;line-height:21px;color:#111;font-weight:normal;-webkit-text-stroke:0.25px #111">19</div>
<div class="t" style="left:-379.2px;width:800px;text-align:center;top:679.7px;font-size:16.3px;line-height:21px;color:#111;font-weight:normal;-webkit-text-stroke:0.25px #111">20</div>
<div class="t" style="left:-379.2px;width:800px;text-align:center;top:701.5px;font-size:16.3px;line-height:21px;color:#111;font-weight:normal;-webkit-text-stroke:0.25px #111">21</div>
<div class="t" style="left:-379.2px;width:800px;text-align:center;top:723.4px;font-size:16.3px;line-height:21px;color:#111;font-weight:normal;-webkit-text-stroke:0.25px #111">22</div>
<div class="t" style="left:-379.2px;width:800px;text-align:center;top:745.3px;font-size:16.3px;line-height:21px;color:#111;font-weight:normal;-webkit-text-stroke:0.25px #111">23</div>
<div class="t" style="left:-379.2px;width:800px;text-align:center;top:767.1px;font-size:16.3px;line-height:21px;color:#111;font-weight:normal;-webkit-text-stroke:0.25px #111">24</div>
<div class="t" style="left:-379.2px;width:800px;text-align:center;top:789.0px;font-size:16.3px;line-height:21px;color:#111;font-weight:normal;-webkit-text-stroke:0.25px #111">25</div>
<div class="t" style="left:-379.2px;width:800px;text-align:center;top:810.9px;font-size:16.3px;line-height:21px;color:#111;font-weight:normal;-webkit-text-stroke:0.25px #111">26</div>
<div class="t" style="left:-379.2px;width:800px;text-align:center;top:832.8px;font-size:16.3px;line-height:21px;color:#111;font-weight:normal;-webkit-text-stroke:0.25px #111">27</div>
<div class="t" style="left:-379.2px;width:800px;text-align:center;top:854.6px;font-size:16.3px;line-height:21px;color:#111;font-weight:normal;-webkit-text-stroke:0.25px #111">28</div>
<div class="t" style="left:-379.2px;width:800px;text-align:center;top:876.5px;font-size:16.3px;line-height:21px;color:#111;font-weight:normal;-webkit-text-stroke:0.25px #111">29</div>
<div class="t" style="left:-379.2px;width:800px;text-align:center;top:898.4px;font-size:16.3px;line-height:21px;color:#111;font-weight:normal;-webkit-text-stroke:0.25px #111">30</div>
<div class="t" style="left:-379.2px;width:800px;text-align:center;top:920.2px;font-size:16.3px;line-height:21px;color:#111;font-weight:normal;-webkit-text-stroke:0.25px #111">31</div>
<div class="t" style="left:-379.2px;width:800px;text-align:center;top:942.1px;font-size:16.3px;line-height:21px;color:#111;font-weight:normal;-webkit-text-stroke:0.25px #111">32</div>
<div class="t" style="left:-379.2px;width:800px;text-align:center;top:964.0px;font-size:16.3px;line-height:21px;color:#111;font-weight:normal;-webkit-text-stroke:0.25px #111">33</div>
<div class="t" style="left:-379.2px;width:800px;text-align:center;top:985.8px;font-size:16.3px;line-height:21px;color:#111;font-weight:normal;-webkit-text-stroke:0.25px #111">34</div>
<div class="t" style="left:-379.2px;width:800px;text-align:center;top:1007.7px;font-size:16.3px;line-height:21px;color:#111;font-weight:normal;-webkit-text-stroke:0.25px #111">35</div>
<div class="t" style="left:-379.2px;width:800px;text-align:center;top:1029.6px;font-size:16.3px;line-height:21px;color:#111;font-weight:normal;-webkit-text-stroke:0.25px #111">36</div>
<div class="r" style="left:41.0px;top:395.2px;width:2.2px;height:21.9px;background:#2e7d46"></div>
<div class="t" style="left:44.0px;top:309.9px;font-size:16.5px;line-height:20px;color:#000;font-weight:normal;-webkit-text-stroke:0.38px #000">Overall Status Distribution</div>
<div class="t" style="left:681.3px;top:309.9px;font-size:16.5px;line-height:20px;color:#000;font-weight:normal;-webkit-text-stroke:0.38px #000">Success Outcomes by Sector</div>
<div class="t" style="left:44.0px;top:352.4px;font-size:16.2px;line-height:20px;color:#000;font-weight:normal;-webkit-text-stroke:0.2px #000">Status</div>
<div class="t" style="left:-276.6px;width:800px;text-align:right;top:352.4px;font-size:16.2px;line-height:20px;color:#000;font-weight:normal;-webkit-text-stroke:0.2px #000">Count</div>
<div class="t" style="left:-191.6px;width:800px;text-align:right;top:352.4px;font-size:16.2px;line-height:20px;color:#000;font-weight:normal;-webkit-text-stroke:0.2px #000;letter-spacing:-0.3px">Percentage</div>
<div class="t" style="left:681.3px;top:352.4px;font-size:16.2px;line-height:20px;color:#000;font-weight:normal;-webkit-text-stroke:0.2px #000">Sector</div>
<div class="t" style="left:381.4px;width:800px;text-align:right;top:352.4px;font-size:16.2px;line-height:20px;color:#000;font-weight:normal;-webkit-text-stroke:0.2px #000">Acquired</div>
<div class="t" style="left:429.6px;width:800px;text-align:right;top:352.4px;font-size:16.2px;line-height:20px;color:#000;font-weight:normal;-webkit-text-stroke:0.2px #000">Public</div>
<div class="t" style="left:532.4px;width:800px;text-align:right;top:352.4px;font-size:16.2px;line-height:20px;color:#000;font-weight:normal;-webkit-text-stroke:0.2px #000">Total Success</div>
<div class="r" style="left:1335.4px;top:351.48px;width:55.9px;height:21px;overflow:hidden"><div class="t" style="left:1.8px;top:0.9px;font-size:16.2px;line-height:20px;-webkit-text-stroke:0.2px #000">Success Rate</div></div>
<div class="t" style="left:44.0px;top:374.3px;font-size:16.2px;line-height:20px;color:#000;font-weight:normal;-webkit-text-stroke:0.2px #000">Active</div>
<div class="t" style="left:-276.6px;width:800px;text-align:right;top:374.3px;font-size:16.2px;line-height:20px;color:#000;font-weight:normal;-webkit-text-stroke:0.2px #000">3547</div>
<div class="t" style="left:-191.6px;width:800px;text-align:right;top:374.3px;font-size:16.2px;line-height:20px;color:#000;font-weight:normal;-webkit-text-stroke:0.2px #000">0.6989163</div>
<div class="t" style="left:681.3px;top:374.3px;font-size:16.2px;line-height:20px;color:#000;font-weight:normal;-webkit-text-stroke:0.2px #000">B2B</div>
<div class="t" style="left:381.4px;width:800px;text-align:right;top:374.3px;font-size:16.2px;line-height:20px;color:#000;font-weight:normal;-webkit-text-stroke:0.2px #000">304</div>
<div class="t" style="left:429.6px;width:800px;text-align:right;top:374.3px;font-size:16.2px;line-height:20px;color:#000;font-weight:normal;-webkit-text-stroke:0.2px #000">6</div>
<div class="t" style="left:532.4px;width:800px;text-align:right;top:374.3px;font-size:16.2px;line-height:20px;color:#000;font-weight:normal;-webkit-text-stroke:0.2px #000">310</div>
<div class="r" style="left:1335.4px;top:373.35px;width:55.9px;height:21px;overflow:hidden"><div class="t" style="left:6px;top:0.9px;font-size:16.2px;line-height:20px;-webkit-text-stroke:0.2px #000">0.1278</div></div>
<div class="t" style="left:44.0px;top:396.2px;font-size:16.2px;line-height:20px;color:#000;font-weight:normal;-webkit-text-stroke:0.2px #000">Acquired</div>
<div class="t" style="left:-276.6px;width:800px;text-align:right;top:396.2px;font-size:16.2px;line-height:20px;color:#000;font-weight:normal;-webkit-text-stroke:0.2px #000">606</div>
<div class="t" style="left:-191.6px;width:800px;text-align:right;top:396.2px;font-size:16.2px;line-height:20px;color:#000;font-weight:normal;-webkit-text-stroke:0.2px #000">0.1194089</div>
<div class="t" style="left:681.3px;top:396.2px;font-size:16.2px;line-height:20px;color:#000;font-weight:normal;-webkit-text-stroke:0.2px #000">Consumer</div>
<div class="t" style="left:381.4px;width:800px;text-align:right;top:396.2px;font-size:16.2px;line-height:20px;color:#000;font-weight:normal;-webkit-text-stroke:0.2px #000">139</div>
<div class="t" style="left:429.6px;width:800px;text-align:right;top:396.2px;font-size:16.2px;line-height:20px;color:#000;font-weight:normal;-webkit-text-stroke:0.2px #000">4</div>
<div class="t" style="left:532.4px;width:800px;text-align:right;top:396.2px;font-size:16.2px;line-height:20px;color:#000;font-weight:normal;-webkit-text-stroke:0.2px #000">143</div>
<div class="r" style="left:1335.4px;top:395.22px;width:55.9px;height:21px;overflow:hidden"><div class="t" style="left:6px;top:0.9px;font-size:16.2px;line-height:20px;-webkit-text-stroke:0.2px #000">0.1763</div></div>
<div class="t" style="left:44.0px;top:418.0px;font-size:16.2px;line-height:20px;color:#000;font-weight:normal;-webkit-text-stroke:0.2px #000">Public</div>
<div class="t" style="left:-276.6px;width:800px;text-align:right;top:418.0px;font-size:16.2px;line-height:20px;color:#000;font-weight:normal;-webkit-text-stroke:0.2px #000">19</div>
<div class="t" style="left:-191.6px;width:800px;text-align:right;top:418.0px;font-size:16.2px;line-height:20px;color:#000;font-weight:normal;-webkit-text-stroke:0.2px #000">0.0037438</div>
<div class="t" style="left:681.3px;top:418.0px;font-size:16.2px;line-height:20px;color:#000;font-weight:normal;-webkit-text-stroke:0.2px #000">Healthcare</div>
<div class="t" style="left:381.4px;width:800px;text-align:right;top:418.0px;font-size:16.2px;line-height:20px;color:#000;font-weight:normal;-webkit-text-stroke:0.2px #000">46</div>
<div class="t" style="left:429.6px;width:800px;text-align:right;top:418.0px;font-size:16.2px;line-height:20px;color:#000;font-weight:normal;-webkit-text-stroke:0.2px #000">4</div>
<div class="t" style="left:532.4px;width:800px;text-align:right;top:418.0px;font-size:16.2px;line-height:20px;color:#000;font-weight:normal;-webkit-text-stroke:0.2px #000">50</div>
<div class="r" style="left:1335.4px;top:417.09000000000003px;width:55.9px;height:21px;overflow:hidden"><div class="t" style="left:6px;top:0.9px;font-size:16.2px;line-height:20px;-webkit-text-stroke:0.2px #000">0.0827</div></div>
<div class="t" style="left:44.0px;top:439.9px;font-size:16.2px;line-height:20px;color:#000;font-weight:normal;-webkit-text-stroke:0.2px #000">Inactive</div>
<div class="t" style="left:-276.6px;width:800px;text-align:right;top:439.9px;font-size:16.2px;line-height:20px;color:#000;font-weight:normal;-webkit-text-stroke:0.2px #000">903</div>
<div class="t" style="left:-191.6px;width:800px;text-align:right;top:439.9px;font-size:16.2px;line-height:20px;color:#000;font-weight:normal;-webkit-text-stroke:0.2px #000">0.1779310</div>
<div class="t" style="left:681.3px;top:439.9px;font-size:16.2px;line-height:20px;color:#000;font-weight:normal;-webkit-text-stroke:0.2px #000">Fintech</div>
<div class="t" style="left:381.4px;width:800px;text-align:right;top:439.9px;font-size:16.2px;line-height:20px;color:#000;font-weight:normal;-webkit-text-stroke:0.2px #000">56</div>
<div class="t" style="left:429.6px;width:800px;text-align:right;top:439.9px;font-size:16.2px;line-height:20px;color:#000;font-weight:normal;-webkit-text-stroke:0.2px #000">1</div>
<div class="t" style="left:532.4px;width:800px;text-align:right;top:439.9px;font-size:16.2px;line-height:20px;color:#000;font-weight:normal;-webkit-text-stroke:0.2px #000">57</div>
<div class="r" style="left:1335.4px;top:438.96000000000004px;width:55.9px;height:21px;overflow:hidden"><div class="t" style="left:6px;top:0.9px;font-size:16.2px;line-height:20px;-webkit-text-stroke:0.2px #000">0.0987</div></div>
<div class="t" style="left:681.3px;top:461.8px;font-size:16.2px;line-height:20px;color:#000;font-weight:normal;-webkit-text-stroke:0.2px #000">Industrials</div>
<div class="t" style="left:381.4px;width:800px;text-align:right;top:461.8px;font-size:16.2px;line-height:20px;color:#000;font-weight:normal;-webkit-text-stroke:0.2px #000">19</div>
<div class="t" style="left:429.6px;width:800px;text-align:right;top:461.8px;font-size:16.2px;line-height:20px;color:#000;font-weight:normal;-webkit-text-stroke:0.2px #000">4</div>
<div class="t" style="left:532.4px;width:800px;text-align:right;top:461.8px;font-size:16.2px;line-height:20px;color:#000;font-weight:normal;-webkit-text-stroke:0.2px #000">23</div>
<div class="r" style="left:1335.4px;top:460.83000000000004px;width:55.9px;height:21px;overflow:hidden"><div class="t" style="left:6px;top:0.9px;font-size:16.2px;line-height:20px;-webkit-text-stroke:0.2px #000">0.0830</div></div>
<div class="t" style="left:44.0px;top:506.7px;font-size:16.5px;line-height:20px;color:#000;font-weight:normal;-webkit-text-stroke:0.38px #000">Key Status Insights</div>
<div class="t" style="left:681.3px;top:506.7px;font-size:16.5px;line-height:20px;color:#000;font-weight:normal;-webkit-text-stroke:0.38px #000">Overall Analysis Summary</div>
<div class="t" style="left:44.0px;top:549.2px;font-size:16.2px;line-height:20px;color:#000;font-weight:normal;-webkit-text-stroke:0.2px #000">1. Active companies represent 69.9% of portfolio - strong overall health</div>
<div class="t" style="left:44.0px;top:571.1px;font-size:16.2px;line-height:20px;color:#000;font-weight:normal;-webkit-text-stroke:0.2px #000">2. Combined success rate (Acquired + Public) is 12.3%</div>
<div class="t" style="left:44.0px;top:593.0px;font-size:16.2px;line-height:20px;color:#000;font-weight:normal;-webkit-text-stroke:0.2px #000">3. Consumer sector leads in success rate at 17.6%</div>
<div class="t" style="left:44.0px;top:614.9px;font-size:16.2px;line-height:20px;color:#000;font-weight:normal;-webkit-text-stroke:0.2px #000">4. Only 19 companies (0.37%) have gone public - IPO is rare outcome</div>
<div class="t" style="left:44.0px;top:636.7px;font-size:16.2px;line-height:20px;color:#000;font-weight:normal;-webkit-text-stroke:0.2px #000">5. Healthcare despite lower success (8.3%) maintains high active rate (78.3%)</div>
<div class="t" style="left:44.0px;top:681.7px;font-size:16.5px;line-height:20px;color:#000;font-weight:normal;-webkit-text-stroke:0.38px #000">Company Size Analysis</div>
<div class="t" style="left:44.0px;top:724.2px;font-size:16.2px;line-height:20px;color:#000;font-weight:normal;-webkit-text-stroke:0.2px #000">Average Size by Status:</div>
<div class="t" style="left:44.0px;top:746.1px;font-size:16.2px;line-height:20px;color:#000;font-weight:normal;-webkit-text-stroke:0.2px #000">Active Companies:</div>
<div class="t" style="left:-191.6px;width:800px;text-align:right;top:746.1px;font-size:16.2px;line-height:20px;color:#000;font-weight:normal;-webkit-text-stroke:0.2px #000">51</div>
<div class="t" style="left:44.0px;top:767.9px;font-size:16.2px;line-height:20px;color:#000;font-weight:normal;-webkit-text-stroke:0.2px #000">Acquired Companies:</div>
<div class="t" style="left:-191.6px;width:800px;text-align:right;top:767.9px;font-size:16.2px;line-height:20px;color:#000;font-weight:normal;-webkit-text-stroke:0.2px #000">49</div>
<div class="t" style="left:44.0px;top:789.8px;font-size:16.2px;line-height:20px;color:#000;font-weight:normal;-webkit-text-stroke:0.2px #000">Public Companies:</div>
<div class="t" style="left:-191.6px;width:800px;text-align:right;top:789.8px;font-size:16.2px;line-height:20px;color:#000;font-weight:normal;-webkit-text-stroke:0.2px #000">1,779</div>
<div class="t" style="left:705.5px;top:549.2px;font-size:16.2px;line-height:20px;color:#000;font-weight:normal;-webkit-text-stroke:0.2px #000">Portfolio Composition:</div>
<svg class="r" style="left:682px;top:548.31px;" width="14" height="14" viewBox="0 0 14 14"></svg>
<div class="r" style="left:682.2px;top:579.3px;width:4.0px;height:4.0px;background:#000;border-radius:50%"></div>
<div class="t" style="left:691.0px;top:571.1px;font-size:16.2px;line-height:20px;color:#000;font-weight:normal;-webkit-text-stroke:0.2px #000">5,075 total companies tracked</div>
<div class="r" style="left:682.2px;top:601.2px;width:4.0px;height:4.0px;background:#000;border-radius:50%"></div>
<div class="t" style="left:691.0px;top:593.0px;font-size:16.2px;line-height:20px;color:#000;font-weight:normal;-webkit-text-stroke:0.2px #000">B2B focus (47.8%) reflects enterprise market opportunity</div>
<div class="r" style="left:682.2px;top:623.1px;width:4.0px;height:4.0px;background:#000;border-radius:50%"></div>
<div class="t" style="left:691.0px;top:614.9px;font-size:16.2px;line-height:20px;color:#000;font-weight:normal;-webkit-text-stroke:0.2px #000">Strong diversity across 8 major sectors</div>
<div class="t" style="left:705.5px;top:658.6px;font-size:16.2px;line-height:20px;color:#000;font-weight:normal;-webkit-text-stroke:0.2px #000">Success Indicators:</div>
<div class="r" style="left:682.2px;top:688.7px;width:4.0px;height:4.0px;background:#000;border-radius:50%"></div>
<div class="t" style="left:691.0px;top:680.5px;font-size:16.2px;line-height:20px;color:#000;font-weight:normal;-webkit-text-stroke:0.2px #000">12.3% successful exit rate (acquired/public)</div>
<div class="r" style="left:682.2px;top:710.5px;width:4.0px;height:4.0px;background:#000;border-radius:50%"></div>
<div class="t" style="left:691.0px;top:702.3px;font-size:16.2px;line-height:20px;color:#000;font-weight:normal;-webkit-text-stroke:0.2px #000">Consumer &amp; B2B sectors show highest exit rates</div>
<div class="r" style="left:682.2px;top:732.4px;width:4.0px;height:4.0px;background:#000;border-radius:50%"></div>
<div class="t" style="left:691.0px;top:724.2px;font-size:16.2px;line-height:20px;color:#000;font-weight:normal;-webkit-text-stroke:0.2px #000">Public companies average 2,842 employees</div>
<div class="t" style="left:705.5px;top:767.9px;font-size:16.2px;line-height:20px;color:#000;font-weight:normal;-webkit-text-stroke:0.2px #000">Trends:</div>
<div class="r" style="left:682.2px;top:798.0px;width:4.0px;height:4.0px;background:#000;border-radius:50%"></div>
<div class="t" style="left:691.0px;top:789.8px;font-size:16.2px;line-height:20px;color:#000;font-weight:normal;-webkit-text-stroke:0.2px #000">Batch sizes growing: 250+ in recent years</div>
<div class="r" style="left:682.2px;top:819.9px;width:4.0px;height:4.0px;background:#000;border-radius:50%"></div>
<div class="t" style="left:691.0px;top:811.7px;font-size:16.2px;line-height:20px;color:#000;font-weight:normal;-webkit-text-stroke:0.2px #000">Fintech surge in 2021-2022 batches</div>
<div class="r" style="left:682.2px;top:841.8px;width:4.0px;height:4.0px;background:#000;border-radius:50%"></div>
<div class="t" style="left:691.0px;top:833.6px;font-size:16.2px;line-height:20px;color:#000;font-weight:normal;-webkit-text-stroke:0.2px #000">Industrials gaining momentum in 2024</div>
<svg class="r" style="left:681px;top:552px;" width="16" height="16" viewBox="0 0 16 16"><rect x="1" y="0.5" width="14" height="15" fill="#eef3f7"/><rect x="1.9" y="5" width="3.2" height="10" fill="#3f9a2e"/><rect x="6.3" y="8" width="3.3" height="7" fill="#a01e10"/><rect x="11" y="2" width="3.2" height="13" fill="#1f3f9e"/></svg>
<svg class="r" style="left:681px;top:661px;" width="16" height="16" viewBox="0 0 16 16"><rect x="1" y="1" width="14" height="14" fill="#eef1f5"/><path d="M1.8 14.5l2.8-4.5 4.2 1.6 5-9.5" fill="none" stroke="#5a1822" stroke-width="1.5" stroke-linejoin="round"/></svg>
<svg class="r" style="left:681px;top:770px;" width="16" height="16" viewBox="0 0 16 16"><rect x="0.6" y="0.6" width="14.8" height="14.8" rx="3.2" fill="#7d8fa8" stroke="#5c6e88" stroke-width="0.8"/><path d="M4 7a4.2 4.2 0 0 1 7.6-1.5M12 9a4.2 4.2 0 0 1-7.6 1.5" fill="none" stroke="#f4f8fc" stroke-width="1.8"/><path d="M12.5 2.8v3.6H9M3.5 13.2V9.6H7" fill="none" stroke="#f4f8fc" stroke-width="1.4"/></svg>
<div class="r" style="left:1115.2px;top:394.2px;width:70.4px;height:23.9px;border:2px solid #225e36"></div>
<div class="r" style="left:1182.0px;top:414.5px;width:5.0px;height:5.0px;background:#2a6a3c"></div>
</div></div>
<div class="r" style="left:1391.3px;top:239.6px;width:22.7px;height:787.4px;background:#fff"></div>
<div class="r" style="left:1391.0px;top:239.2px;width:23.0px;height:1.2px;background:#cfcfcf"></div>
<div class="r" style="left:1391.0px;top:240.0px;width:1.0px;height:787.0px;background:#c8c8c8"></div>
<div class="r" style="left:1395.0px;top:243.0px;width:15.7px;height:782.5px;background:#e9e9e9"></div>
<div class="r" style="left:1395.0px;top:243.0px;width:15.7px;height:16.0px;background:#fff;border:1px solid #b4b4b4;border-bottom:1.5px solid #9a9a9a;border-radius:2px 2px 0 0"></div>
<svg class="r" style="left:1399px;top:247px;" width="8" height="5" viewBox="0 0 8 5"><path d="M0 5L4 0l4 5z" fill="#666"/></svg>
<div class="r" style="left:1395.0px;top:259.0px;width:15.7px;height:727.0px;background:#fff;border:1px solid #b4b4b4;border-top:none"></div>
<div class="r" style="left:1395.0px;top:1010.5px;width:15.7px;height:15.0px;background:#fff;border:1px solid #b4b4b4"></div>
<svg class="r" style="left:1399px;top:1016px;" width="8" height="5" viewBox="0 0 8 5"><path d="M0 0h8L4 5z" fill="#666"/></svg>
<div class="r" style="left:0.0px;top:1026.5px;width:1414.0px;height:30.5px;background:#f3f3f3"></div>
<div class="r" style="left:0.0px;top:1026.0px;width:553.0px;height:1.2px;background:#c4c4c4"></div>
<div class="r" style="left:601.2px;top:1026.0px;width:790.3px;height:1.2px;background:#c4c4c4"></div>
<svg class="r" style="left:25px;top:1036px;" width="6" height="10" viewBox="0 0 6 10"><path d="M6 0v10L0 5z" fill="#bbb"/></svg>
<svg class="r" style="left:58px;top:1036px;" width="6" height="10" viewBox="0 0 6 10"><path d="M0 0v10l6-5z" fill="#1f5c33"/></svg>
<svg class="r" style="left:76px;top:1035px;" width="18" height="14" viewBox="0 0 18 14"><path d="M1 2h16M1 7h16M1 12h16" stroke="#1f5c33" stroke-width="2"/></svg>
<div class="r" style="left:124.0px;top:1031.0px;width:1.2px;height:21.0px;background:#bbb"></div>
<div class="r" style="left:196.7px;top:1031.0px;width:1.2px;height:21.0px;background:#bbb"></div>
<div class="r" style="left:287.7px;top:1031.0px;width:1.2px;height:21.0px;background:#bbb"></div>
<div class="r" style="left:422.0px;top:1031.0px;width:1.2px;height:21.0px;background:#bbb"></div>
<div class="t" style="left:137.8px;top:1031.5px;font-size:14.8px;line-height:19px;color:#333;font-weight:normal;">Sheet1</div>
<div class="t" style="left:211.2px;top:1031.5px;font-size:14.8px;line-height:19px;color:#333;font-weight:normal;">Overview</div>
<div class="t" style="left:301.8px;top:1031.5px;font-size:14.8px;line-height:19px;color:#333;font-weight:normal;">Sector Analysis</div>
<div class="t" style="left:436.5px;top:1031.5px;font-size:14.8px;line-height:19px;color:#333;font-weight:normal;">Batch Analysis</div>
<div class="r" style="left:552.3px;top:1026.0px;width:48.9px;height:26.0px;background:#fff;border-left:1.2px solid #bdbdbd"></div>
<div class="r" style="left:552.3px;top:1050.8px;width:48.9px;height:2.4px;background:#1f5c33"></div>
<div class="r" style="left:552.3px;top:1027px;width:48.9px;height:26px;overflow:hidden"><div class="t" style="left:14px;top:3.5px;font-size:14.8px;line-height:20px;color:#225e36;-webkit-text-stroke:0.3px #225e36">Status Analysis</div></div>
<div class="t" style="left:612.0px;top:1033.0px;font-size:14px;line-height:18px;color:#222;font-weight:bold;">···</div>
<svg class="r" style="left:638px;top:1033px;" width="18" height="18" viewBox="0 0 18 18"><circle cx="9" cy="9" r="7.8" fill="none" stroke="#444" stroke-width="1.3"/><path d="M9 4.5v9M4.5 9h9" stroke="#444" stroke-width="1.3"/></svg>
<svg class="r" style="left:678px;top:1035px;" width="4" height="14" viewBox="0 0 4 14"><circle cx="2" cy="2" r="1" fill="#999"/><circle cx="2" cy="7" r="1" fill="#999"/><circle cx="2" cy="12" r="1" fill="#999"/></svg>
<div class="r" style="left:695.7px;top:1034.6px;width:694.7px;height:15.2px;background:#e9e9e9"></div>
<div class="r" style="left:695.7px;top:1034.6px;width:15.3px;height:15.2px;background:#fff;border:1px solid #c4c4c4"></div>
<svg class="r" style="left:700px;top:1038px;" width="5" height="8" viewBox="0 0 5 8"><path d="M5 0v8L0 4z" fill="#555"/></svg>
<div class="r" style="left:710.0px;top:1034.6px;width:590.5px;height:15.2px;background:#fff;border:1px solid #c4c4c4"></div>
<div class="r" style="left:1374.3px;top:1034.6px;width:16.1px;height:15.2px;background:#fff;border:1px solid #c4c4c4"></div>
<svg class="r" style="left:1380px;top:1038px;" width="5" height="8" viewBox="0 0 5 8"><path d="M0 0v8l5-4z" fill="#555"/></svg>
<div class="r" style="left:0.0px;top:1056.0px;width:1414.0px;height:1.0px;background:#fff"></div>
<div class="r" style="left:0.0px;top:1057.0px;width:1414.0px;height:23.0px;background:#3c7a4c"></div>
<svg class="r" style="left:0px;top:1074px;" width="6" height="6" viewBox="0 0 6 6"><path d="M0 0L6 6H0z" fill="#111"/></svg>
<svg class="r" style="left:1880px;top:1072px;" width="7" height="8" viewBox="0 0 7 8"><path d="M7 0V8H0z" fill="#111"/></svg>
<div class="t" style="left:9.5px;top:1061.0px;font-size:13px;line-height:17px;color:#e8f0ea;font-weight:normal;">Ready</div>
<div class="t" style="left:59.0px;top:1061.0px;font-size:13px;line-height:17px;color:#e8f0ea;font-weight:normal;">准备好</div>
<div class="r" style="left:1187.0px;top:1068.8px;width:12.0px;height:1.4px;background:#fff"></div>
<div class="r" style="left:1206.0px;top:1068.8px;width:131.0px;height:1.4px;background:#fff"></div>
<div class="r" style="left:1269.5px;top:1065.0px;width:4.5px;height:11.0px;background:#fff"></div>
<div class="r" style="left:1344.0px;top:1068.8px;width:13.5px;height:1.4px;background:#fff"></div>
<div class="r" style="left:1350.0px;top:1062.5px;width:1.4px;height:14.0px;background:#fff"></div>
<div class="t" style="left:1371.0px;top:1061.0px;font-size:13px;line-height:17px;color:#fff;font-weight:normal;">100%</div>
<div class="r" style="left:1415.0px;top:34.5px;width:472.0px;height:1045.5px;background:#f3f3f3"></div>
<svg class="r" style="left:1444px;top:42px;" width="23" height="22" viewBox="0 0 23 22"><rect x="1" y="1" width="20.5" height="19.5" rx="2.5" fill="none" stroke="#999" stroke-width="1.1"/><path d="M15 1v19.5" stroke="#999" stroke-width="1.1"/><path d="M7 7.5l3 3-3 3" fill="none" stroke="#999" stroke-width="1.1"/></svg>
<div class="r" style="left:1652.4px;top:39.5px;width:173.9px;height:25.5px;background:#f6f6f6;border:1px solid #d4d4d4;border-radius:6px"></div>
<svg class="r" style="left:1664px;top:46px;" width="14" height="14" viewBox="0 0 14 14"><path d="M7 1.5v11M1.5 7h11" stroke="#333" stroke-width="1.3"/></svg>
<div class="t" style="left:1688.5px;top:43.5px;font-size:13.5px;line-height:18px;color:#333;font-weight:normal;letter-spacing:0.2px">New Chat</div>
<div class="t" style="left:1754.0px;top:43.5px;font-size:13.5px;line-height:18px;color:#333;font-weight:normal;">新建聊天</div>
<svg class="r" style="left:1841px;top:41px;" width="23" height="23" viewBox="0 0 23 23"><path d="M4.5 6.5A9 9 0 1 1 3 12" fill="none" stroke="#aaa" stroke-width="1.4"/><path d="M2.5 3v4.5H7" fill="none" stroke="#aaa" stroke-width="1.4"/><path d="M12 6.5V12l3.5 2.5" fill="none" stroke="#aaa" stroke-width="1.4"/></svg>
<div class="r" style="left:1451px;top:86.7px;width:402px;height:784.5px;background:#fff;border-left:1.2px solid #c2c2c2;border-right:1.2px solid #c2c2c2;overflow:hidden">
<div class="t" style="left:19px;top:-9.3px;font-size:17px;letter-spacing:0.45px;line-height:26.2px;color:#111;-webkit-text-stroke:0.25px #111">represent each insight.</div>
<div class="t" style="left:19px;top:26.7px;font-size:17px;letter-spacing:0.45px;line-height:26.2px;color:#111;-webkit-text-stroke:0.25px #111">分析 Sheet1!A4:H5079 中的 YC 公司数据，创</div>
<div class="t" style="left:19px;top:52.9px;font-size:17px;letter-spacing:0.45px;line-height:26.2px;color:#111;-webkit-text-stroke:0.25px #111">建一个包含深入洞察的多表分析。将分析内容</div>
<div class="t" style="left:19px;top:79.1px;font-size:17px;letter-spacing:0.45px;line-height:26.2px;color:#111;-webkit-text-stroke:0.25px #111">组织在多个工作表中：</div>
<div class="t" style="left:19px;top:131.5px;font-size:17px;letter-spacing:0.45px;line-height:26.2px;color:#111;-webkit-text-stroke:0.25px #111">1. **概览表（Overview!A1:K30）**：创建关键</div>
<div class="t" style="left:19px;top:157.7px;font-size:17px;letter-spacing:0.45px;line-height:26.2px;color:#111;-webkit-text-stroke:0.25px #111">指标仪表板，包括公司总数、行业分布汇总、</div>
<div class="t" style="left:19px;top:183.9px;font-size:17px;letter-spacing:0.45px;line-height:26.2px;color:#111;-webkit-text-stroke:0.25px #111">批次汇总和状态细分，并配以相关图表</div>
<div class="t" style="left:19px;top:236.3px;font-size:17px;letter-spacing:0.45px;line-height:26.2px;color:#111;-webkit-text-stroke:0.25px #111">2. **行业分析（Sector Analysis!A1:M50）**：</div>
<div class="t" style="left:19px;top:262.5px;font-size:17px;letter-spacing:0.45px;line-height:26.2px;color:#111;-webkit-text-stroke:0.25px #111">分析行业趋势、按公司数量排名的顶级行业、</div>
<div class="t" style="left:19px;top:288.7px;font-size:17px;letter-spacing:0.45px;line-height:26.2px;color:#111;-webkit-text-stroke:0.25px #111">批次间的行业增长、行业内热门标签。包含行</div>
<div class="t" style="left:19px;top:314.9px;font-size:17px;letter-spacing:0.45px;line-height:26.2px;color:#111;-webkit-text-stroke:0.25px #111">业分布的饼图、顶级行业的条形图以及展示行</div>
<div class="t" style="left:19px;top:341.1px;font-size:17px;letter-spacing:0.45px;line-height:26.2px;color:#111;-webkit-text-stroke:0.25px #111">业演变的组合图表</div>
<div class="t" style="left:19px;top:393.5px;font-size:17px;letter-spacing:0.45px;line-height:26.2px;color:#111;-webkit-text-stroke:0.25px #111">3. **批次分析（Batch Analysis!A1:M50）**：</div>
<div class="t" style="left:19px;top:419.7px;font-size:17px;letter-spacing:0.45px;line-height:26.2px;color:#111;-webkit-text-stroke:0.25px #111">考察批次绩效指标、随时间变化的批次规模、</div>
<div class="t" style="left:19px;top:445.9px;font-size:17px;letter-spacing:0.45px;line-height:26.2px;color:#111;-webkit-text-stroke:0.25px #111">按批次的成功率、公司成立趋势。创建时间趋</div>
<div class="t" style="left:19px;top:472.1px;font-size:17px;letter-spacing:0.45px;line-height:26.2px;color:#111;-webkit-text-stroke:0.25px #111">势的折线图和批次规模比较的条形图</div>
<div class="t" style="left:19px;top:524.5px;font-size:17px;letter-spacing:0.45px;line-height:26.2px;color:#111;-webkit-text-stroke:0.25px #111">4. **状态分析（Status Analysis!A1:K30）**：</div>
<div class="t" style="left:19px;top:550.7px;font-size:17px;letter-spacing:0.45px;line-height:26.2px;color:#111;-webkit-text-stroke:0.25px #111">分析公司状态分布（活跃、被收购、已关闭）、</div>
<div class="t" style="left:19px;top:576.9px;font-size:17px;letter-spacing:0.45px;line-height:26.2px;color:#111;-webkit-text-stroke:0.25px #111">成功率、按行业和批次的结果。包括状态分布</div>
<div class="t" style="left:19px;top:603.1px;font-size:17px;letter-spacing:0.45px;line-height:26.2px;color:#111;-webkit-text-stroke:0.25px #111">的饼图和状态趋势的组合图表</div>
<div class="t" style="left:19px;top:655.5px;font-size:17px;letter-spacing:0.45px;line-height:26.2px;color:#111;-webkit-text-stroke:0.25px #111">为每个工作表提供全面的洞察，包括行业趋</div>
<div class="t" style="left:19px;top:681.7px;font-size:17px;letter-spacing:0.45px;line-height:26.2px;color:#111;-webkit-text-stroke:0.25px #111">势、批次表现模式、公司状态分布、规模分</div>
<div class="t" style="left:19px;top:707.9px;font-size:17px;letter-spacing:0.45px;line-height:26.2px;color:#111;-webkit-text-stroke:0.25px #111">析、热门标签分析、成功率计算，并识别数据</div>
<div class="t" style="left:19px;top:734.1px;font-size:17px;letter-spacing:0.45px;line-height:26.2px;color:#111;-webkit-text-stroke:0.25px #111">中的显著模式或异常。使用多种可视化类型以</div>
<div class="t" style="left:19px;top:760.3px;font-size:17px;letter-spacing:0.45px;line-height:26.2px;color:#111;-webkit-text-stroke:0.25px #111">最佳方式呈现每个洞察。</div>
</div>
<div class="r" style="left:1440.0px;top:72.0px;width:430.0px;height:20.0px;background:linear-gradient(#f3f3f3 40%,rgba(243,243,243,0))"></div>
<div class="r" style="left:1634px;top:824px;width:38px;height:38px;border-radius:50%;background:#fff;box-shadow:0 1px 4px rgba(0,0,0,0.18);border:1px solid #e4e4e4"></div>
<svg class="r" style="left:1646px;top:834px;" width="14" height="16" viewBox="0 0 14 16"><path d="M7 1v13M2 9l5 5 5-5" fill="none" stroke="#333" stroke-width="1.4"/></svg>
<div class="r" style="left:1434.3px;top:880.3px;width:435.2px;height:141.3px;background:#f8f9fa;border:1px solid #dedede;box-shadow:0 2px 6px rgba(0,0,0,0.08)"></div>
<div class="r" style="left:1444.0px;top:890.6px;width:131.0px;height:21.0px;background:#f8f9fa;border:1px solid #d4d4d4"></div>
<div class="t" style="left:1456.0px;top:892.0px;font-size:13.5px;line-height:18px;color:#111;font-weight:normal;-webkit-text-stroke:0.25px currentColor">Max</div>
<div class="t" style="left:1495.0px;top:892.5px;font-size:13px;line-height:17px;color:#111;font-weight:normal;-webkit-text-stroke:0.25px currentColor">最大值</div>
<svg class="r" style="left:1548px;top:893px;" width="11" height="16" viewBox="0 0 11 16"><path d="M1.5 6L5.5 2l4 4M1.5 10l4 4 4-4" fill="none" stroke="#444" stroke-width="1.1"/></svg>
<div class="r" style="left:1584.4px;top:890.0px;width:276.6px;height:21.4px;background:#f8f9fa;border:1px solid #d4d4d4;border-right:none"></div>
<div class="t" style="left:1596.0px;top:892.5px;font-size:13px;line-height:17px;color:#111;font-weight:normal;letter-spacing:0.55px;-webkit-text-stroke:0.25px currentColor">Add sheets to focus</div>
<div class="t" style="left:1736.0px;top:892.5px;font-size:13px;line-height:17px;color:#111;font-weight:normal;-webkit-text-stroke:0.25px currentColor">添加工作表以聚焦</div>
<svg class="r" style="left:1848px;top:893px;" width="11" height="16" viewBox="0 0 11 16"><path d="M1.5 6L5.5 2l4 4M1.5 10l4 4 4-4" fill="none" stroke="#444" stroke-width="1.1"/></svg>
<div class="t" style="left:1453.0px;top:922.5px;font-size:13.7px;line-height:18px;color:#8a8a8a;font-weight:normal;">Type your message here...</div>
<svg class="r" style="left:1452px;top:986px;" width="18" height="20" viewBox="0 0 18 20"><path d="M14.5 8.5l-6.5 6.5a3.5 3.5 0 0 1-5-5l7.5-7.5a2.3 2.3 0 0 1 3.3 3.3l-7.3 7.3a1.1 1.1 0 0 1-1.6-1.6l6.5-6.5" fill="none" stroke="#777" stroke-width="1.3"/></svg>
<div class="r" style="left:1821.3px;top:987.2px;width:34.7px;height:16.9px;background:#8fb69a;border-radius:3px"></div>
<svg class="r" style="left:1832px;top:990px;" width="14" height="11" viewBox="0 0 14 11"><path d="M11 2v4.5H3M5.5 4L3 6.5 5.5 9" fill="none" stroke="#eef5ef" stroke-width="1"/></svg>
<div class="t" style="left:1434.0px;top:1032.0px;font-size:13.5px;line-height:18px;color:#6a6a6a;font-weight:normal;-webkit-text-stroke:0.45px #6a6a6a;letter-spacing:0.3px">Free Plan:</div>
<div class="t" style="left:1507.0px;top:1032.5px;font-size:13px;line-height:17px;color:#6a6a6a;font-weight:normal;-webkit-text-stroke:0.45px #6a6a6a">免费计</div>
<div class="t" style="left:1434.0px;top:1049.5px;font-size:13px;line-height:17px;color:#6a6a6a;font-weight:normal;-webkit-text-stroke:0.45px #6a6a6a">划:</div>
<div class="t" style="left:1567.0px;top:1032.5px;font-size:13px;line-height:17px;color:#888;font-weight:normal;letter-spacing:0.35px">2 messages left</div>
<div class="t" style="left:1671.0px;top:1032.5px;font-size:13px;line-height:17px;color:#888;font-weight:normal;">剩余 2 条</div>
<div class="t" style="left:1567.0px;top:1049.5px;font-size:13px;line-height:17px;color:#888;font-weight:normal;">消息</div>
<div class="r" style="left:1743.2px;top:1036.2px;width:126.8px;height:26.3px;background:linear-gradient(90deg,#f08a3c,#e7d84a,#7bd67a,#4aa8e8,#6a6ef0);border-radius:8px"></div>
<div class="r" style="left:1743.2px;top:1036.2px;width:126.8px;height:24.3px;background:#111;border-radius:8px"></div>
<div class="t" style="left:1759.0px;top:1040.0px;font-size:14px;line-height:18px;color:#fff;font-weight:normal;-webkit-text-stroke:0.25px currentColor">Upgrade</div>
<div class="t" style="left:1829.0px;top:1040.5px;font-size:13px;line-height:17px;color:#fff;font-weight:normal;-webkit-text-stroke:0.25px currentColor">升级</div>
</body></html>
